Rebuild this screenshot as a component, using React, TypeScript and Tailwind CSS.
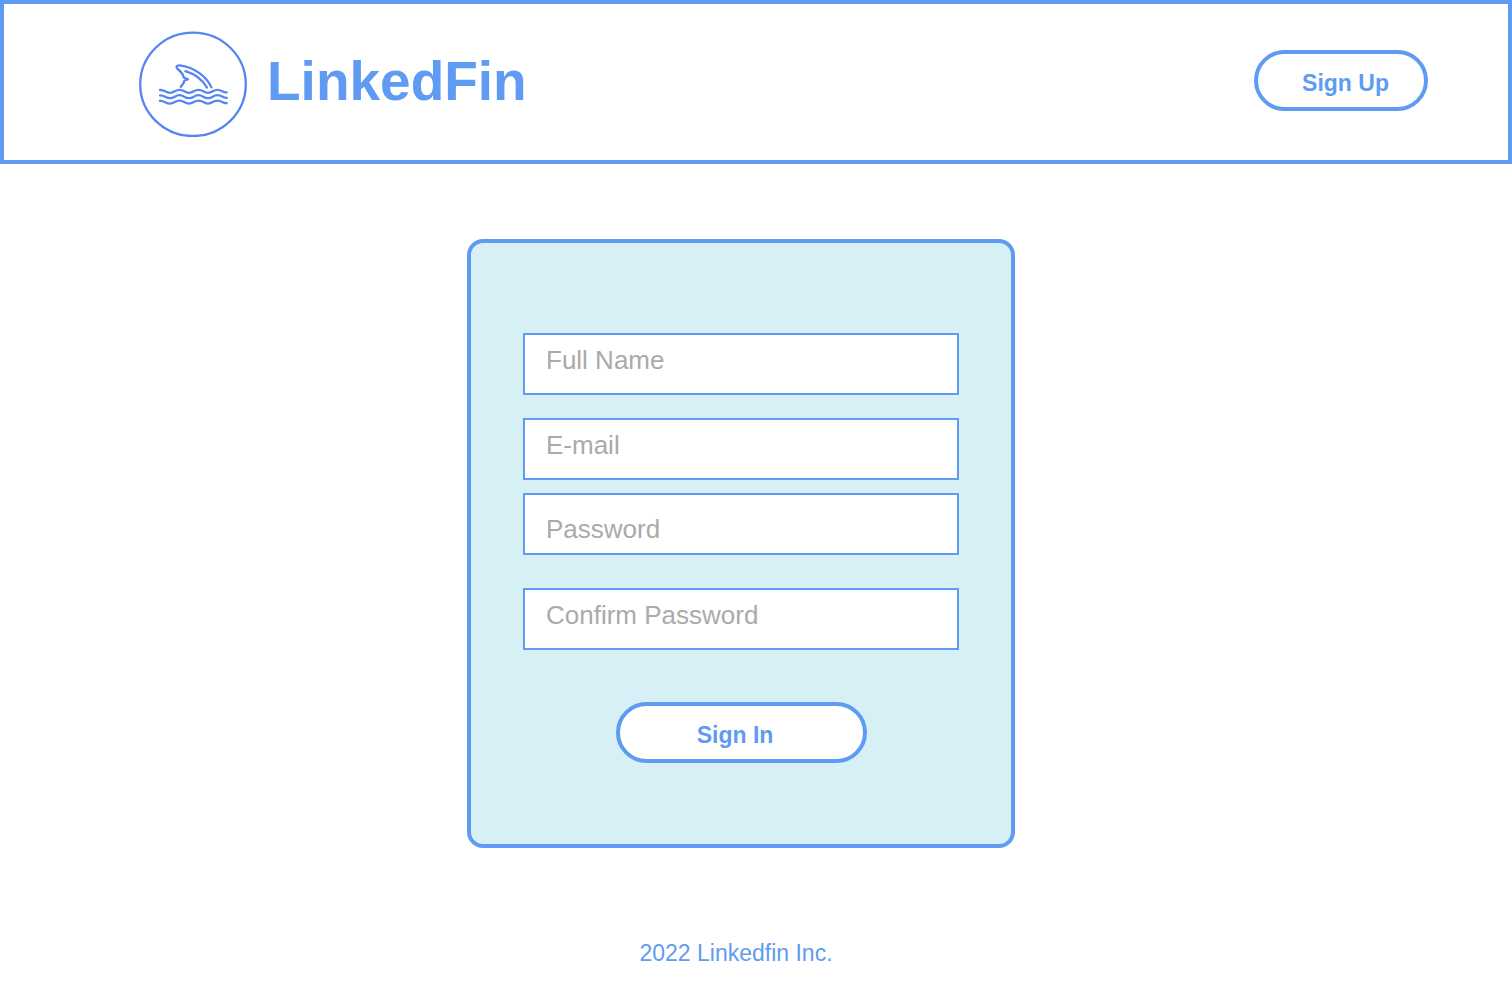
function FinLogo() {
  return (
    <svg
      className="h-[106px] w-[108px] shrink-0"
      viewBox="0 0 108 106"
      fill="none"
      stroke="#5585f5"
      strokeLinecap="round"
      strokeLinejoin="round"
      aria-hidden="true"
    >
      <ellipse cx="54" cy="53.3" rx="52.8" ry="51.7" strokeWidth="2.3" />
      <g strokeWidth="2.3">
        <path d="M72.4 56.4C68 46.500 56.500 36.300 40.500 34.400C37.400 34.200 36.600 36.200 38.600 38C42 40.600 44.200 43 44.700 46.500L49 48.200L45.200 49.800C45 52.500 43.300 54 41.700 55.800" />
        <path d="M46.400 40.200C56 43 63.500 49 68 56.600" />
        <path d="M21 59C25.500 58.600 26.500 61.800 31 61.800S36 58.800 40.500 58.800S45.500 61.800 50 61.800S55 58.800 59.500 58.800S64.500 61.800 69 61.800S74 58.800 78.500 58.800S83.500 61.800 87.700 61.400" />
        <path d="M21 64.400C25.500 64 26.500 67.200 31 67.200S36 64.200 40.500 64.200S45.500 67.200 50 67.200S55 64.200 59.500 64.200S64.500 67.200 69 67.200S74 64.200 78.500 64.200S83.500 67.200 87.700 66.800" />
        <path d="M21 69.800C25.500 69.400 26.500 72.600 31 72.600S36 69.600 40.500 69.600S45.500 72.600 50 72.600S55 69.600 59.500 69.600S64.500 72.600 69 72.600S74 69.600 78.500 69.600S83.500 72.600 87.700 72.200" />
      </g>
    </svg>
  );
}

const fieldClass =
  "block h-[62px] w-full border-2 border-[#5f9bf2] bg-white px-[21px] text-[26px] text-gray-700 outline-none placeholder:text-[#aaaaaa]";

const buttonClass =
  "h-[61px] cursor-pointer rounded-full border-4 border-[#5f9bf2] bg-white pt-[6px] text-[23px] font-bold";

export default function App() {
  return (
    <div className="bg-white font-['Liberation_Sans',Arial,sans-serif] text-[#5f9bf2]">
      <header className="flex items-start justify-between border-4 border-[#5f9bf2] pt-[27px] pr-20 pb-[23px] pl-[135px]">
        <a href="#" className="flex items-center gap-5">
          <FinLogo />
          <h1 className="pb-[6px] text-[55px] leading-none font-bold">LinkedFin</h1>
        </a>
        <button type="button" className={`${buttonClass} mt-[19px] w-[174px] pl-[9px]`}>
          Sign Up
        </button>
      </header>

      <main className="mt-[75px] flex justify-center pr-[30px]">
        <form
          className="flex w-[548px] flex-col items-center rounded-2xl border-4 border-[#5f9bf2] bg-[#d6f0f6] px-[52px] pt-[90px] pb-[81px]"
          onSubmit={(e) => e.preventDefault()}
        >
          <input className={`${fieldClass} pb-2`} type="text" placeholder="Full Name" aria-label="Full Name" />
          <input className={`${fieldClass} mt-[23px] pb-2`} type="email" placeholder="E-mail" aria-label="E-mail" />
          <input className={`${fieldClass} mt-[13px] pt-[10px]`} type="password" placeholder="Password" aria-label="Password" />
          <input
            className={`${fieldClass} mt-[33px] pb-2`}
            type="password"
            placeholder="Confirm Password"
            aria-label="Confirm Password"
          />
          <button type="submit" className={`${buttonClass} mt-[52px] w-[251px] pr-3`}>
            Sign In
          </button>
        </form>
      </main>

      <footer className="mt-[89px] pr-10 text-center text-[23px] leading-8">2022 Linkedfin Inc.</footer>
    </div>
  );
}
